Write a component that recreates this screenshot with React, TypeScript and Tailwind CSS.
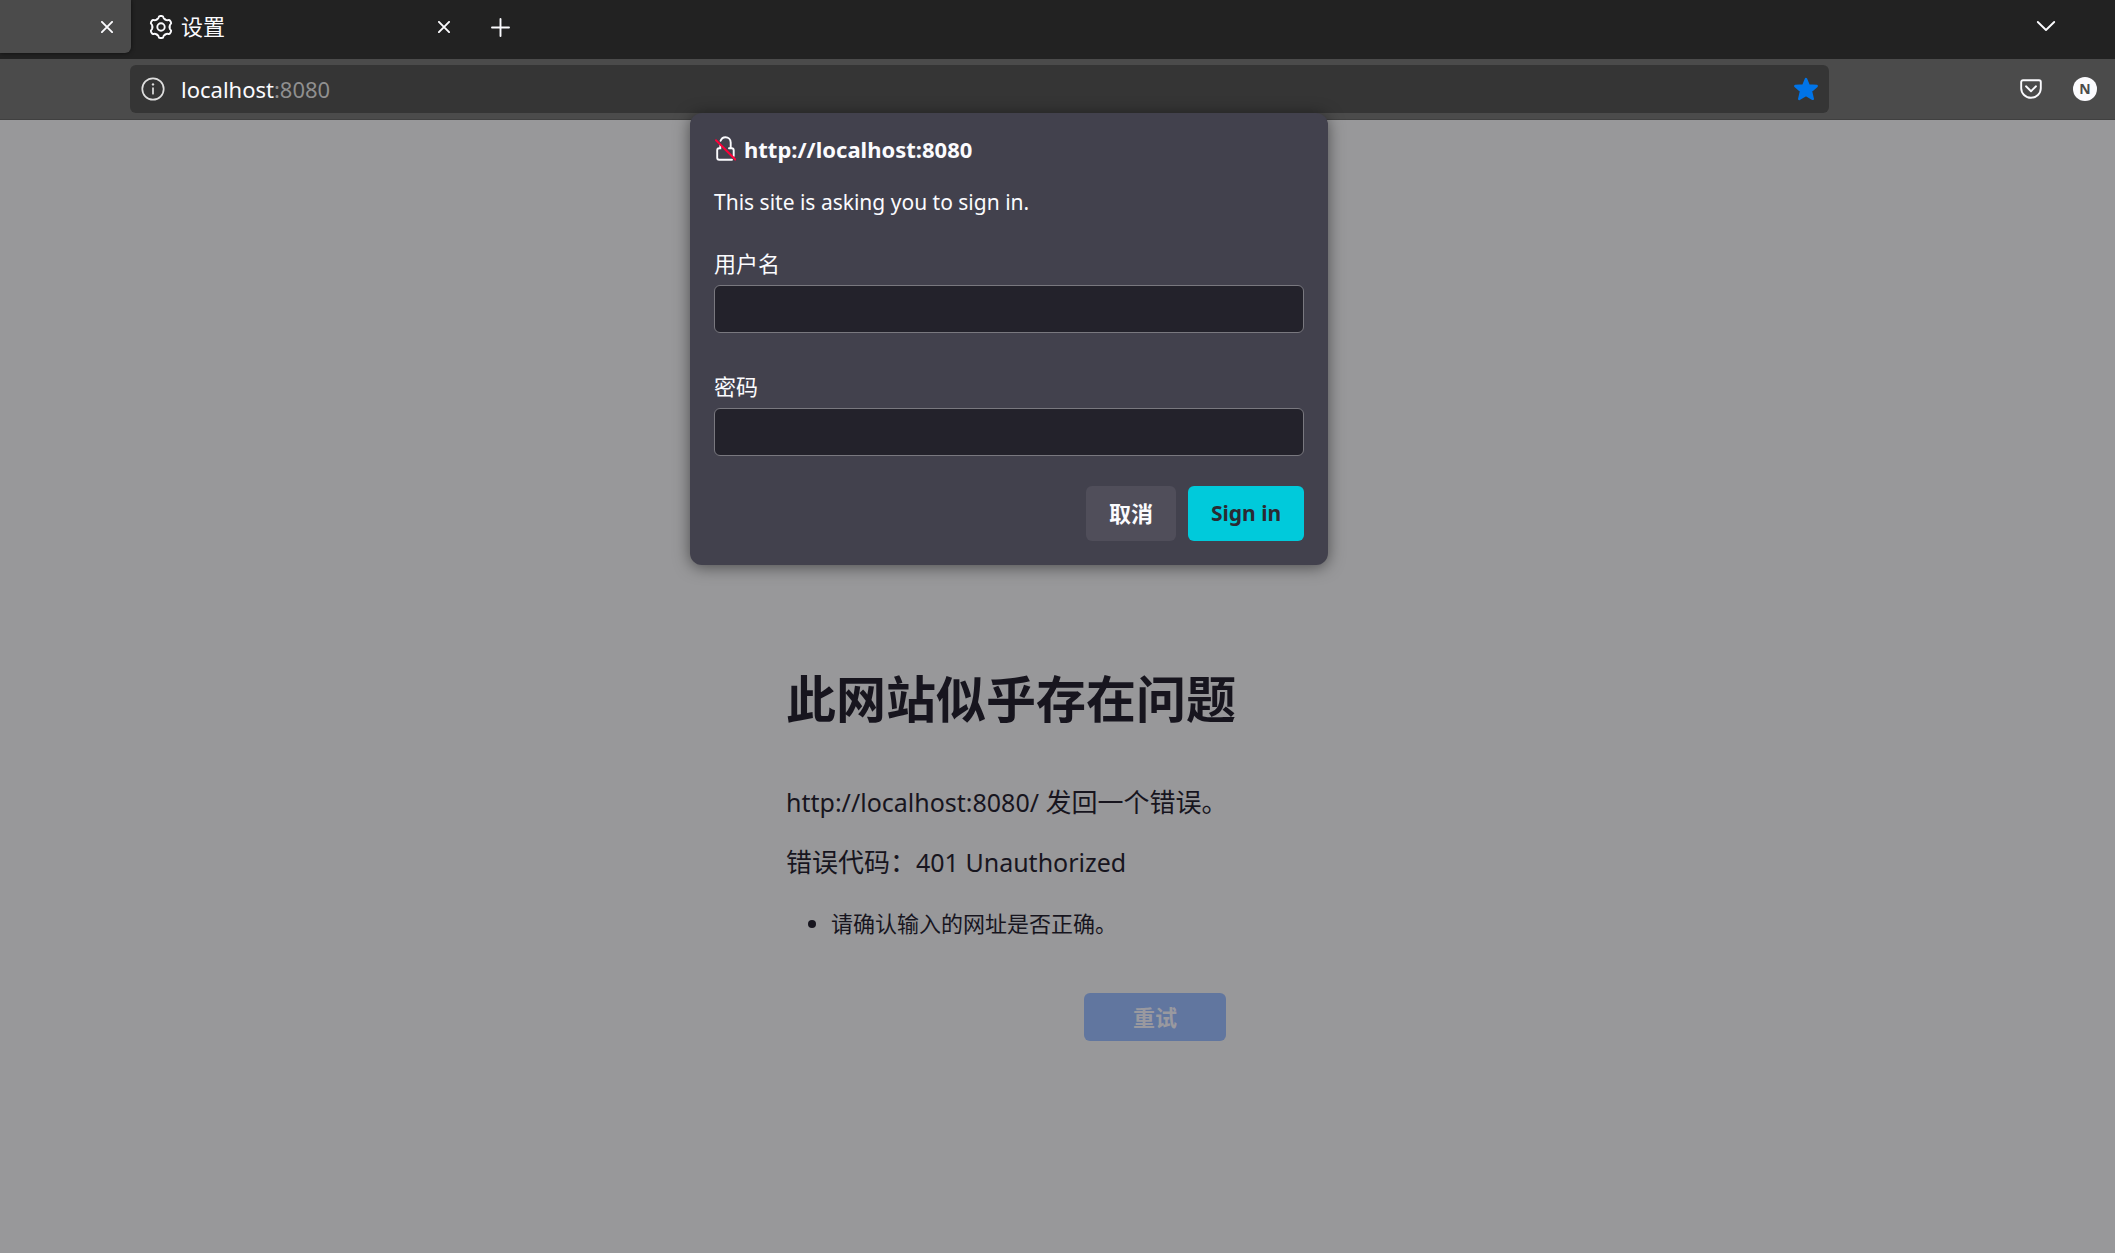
import React from "react";

const icon = "fill-none stroke-current";

function CloseIcon() {
  return (
    <svg viewBox="0 0 12 12" className={`${icon} size-3`} strokeWidth="1.9" strokeLinecap="round" aria-hidden="true">
      <path d="M0.900 0.900l10.200 10.200M11.100 0.900L0.900 11.100" />
    </svg>
  );
}

function GearIcon() {
  const lobe = "M-4.3-7.450C-3.300-8-2.700-8.400-2.500-9.300C-2.300-10.600-1.700-11-.9-11H.9C1.700-11 2.300-10.600 2.500-9.300C2.700-8.400 3.300-8 4.300-7.450";
  return (
    <svg viewBox="-12 -12 24 24" className={`${icon} size-6`} strokeWidth="1.900" strokeLinecap="round" aria-hidden="true">
      {[0, 60, 120, 180, 240, 300].map((angle) => (
        <path key={angle} d={lobe} transform={`rotate(${angle})`} />
      ))}
      <circle r="3.700" />
    </svg>
  );
}

function InfoIcon() {
  return (
    <svg viewBox="0 0 24 24" className={`${icon} size-6`} strokeWidth="1.700" strokeLinecap="round" aria-hidden="true">
      <circle cx="12" cy="12" r="10.700" />
      <path d="M12 11v5.700" />
      <circle cx="12" cy="7.400" r="1.200" fill="currentColor" stroke="none" />
    </svg>
  );
}

function StarIcon() {
  return (
    <svg viewBox="0 0 24 24" className="size-6 fill-current stroke-current" strokeWidth="2.400" strokeLinejoin="round" aria-hidden="true">
      <path d="M12 2l2.700 6.400 8 .6-5.700 5.200 1.800 7.700-6.800-4-6.800 4L7 14.200 1.300 9l8-.6z" />
    </svg>
  );
}

function PocketIcon() {
  return (
    <svg viewBox="0 0 22 20" className={`${icon} h-5 w-[22px]`} strokeWidth="1.900" strokeLinecap="round" strokeLinejoin="round" aria-hidden="true">
      <path d="M3 1.200h16c1 0 1.800.8 1.800 1.800v6.200c0 5.200-4.400 9.600-9.800 9.600S1.200 14.400 1.200 9.200V3c0-1 .8-1.800 1.800-1.800z" />
      <path d="M6 7.300l5 4.900 5-4.900" />
    </svg>
  );
}

function InsecureLockIcon() {
  return (
    <svg viewBox="0 0 22 26" className={`${icon} h-[26px] w-[22px]`} strokeWidth="1.900" strokeLinecap="round" aria-hidden="true">
      <path d="M6.600 4.800C7.400 2.500 9.200 1.200 11.400 1.200c3 0 5.300 2.300 5.300 5.300v5.800M6.300 9.500v2.800H5.200c-1.200 0-2 .8-2 2v7.500c0 1.200.8 2 2 2h12.800M15 12.300h2.700c1.200 0 2 .8 2 2v5.700" />
      <path d="M2 4.200l19.300 19.300" stroke="#ff0039" strokeWidth="2" />
    </svg>
  );
}

function Field({ id, label, type }: { id: string; label: string; type: string }) {
  return (
    <div className="flex flex-col gap-2">
      <label htmlFor={id} className="text-[22px] leading-7">{label}</label>
      <input id={id} type={type} className="h-12 w-full rounded-md border border-[#79787f] bg-[#23222b] px-3 text-[22px] outline-none" />
    </div>
  );
}

export default function App() {
  return (
    <div lang="zh-CN" className="relative flex min-h-screen flex-col bg-[#98989a] font-['Noto_Sans','Noto_Sans_CJK_SC',sans-serif] text-[#fbfbfe]">
      <header>
        <div className="flex h-[59px] items-start bg-[#222222]">
          <div className="flex h-[53px] w-[131px] items-center justify-end rounded-br-md bg-[#4b4b4b] pr-[18px] shadow-[0_0_4px_rgba(0,0,0,0.6)]">
            <button aria-label="关闭标签页"><CloseIcon /></button>
          </div>
          <div className="flex h-[53px] w-[319px] items-center pl-[18px]">
            <GearIcon />
            <span className="ml-2 pb-0.5 text-[22px] leading-7">设置</span>
            <button aria-label="关闭标签页" className="ml-auto"><CloseIcon /></button>
          </div>
          <button aria-label="新建标签页" className="ml-10 flex h-[53px] items-center">
            <svg viewBox="0 0 20 20" className={`${icon} size-5`} strokeWidth="1.900" strokeLinecap="round" aria-hidden="true">
              <path d="M10.500 2v17M2 10.500h17" />
            </svg>
          </button>
          <button aria-label="列出所有标签页" className="mr-[59px] ml-auto flex h-[51px] items-center">
            <svg viewBox="0 0 20 12" className={`${icon} h-3 w-5`} strokeWidth="1.900" strokeLinecap="round" strokeLinejoin="round" aria-hidden="true">
              <path d="M1.800 2l8.200 8 8.200-8" />
            </svg>
          </button>
        </div>
        <div className="flex h-[61px] items-center border-b border-[#404040] bg-[#4b4b4b] pr-[18px] pl-[130px]">
          <div className="flex h-12 flex-1 items-center rounded-md bg-[#353535] pr-[11px] pl-[11px]">
            <button aria-label="网站信息" className="text-[#dedede]"><InfoIcon /></button>
            <div className="ml-4 text-[22px] leading-7">
              localhost<span className="text-[#8f8f8f]">:8080</span>
            </div>
            <button aria-label="编辑书签" className="ml-auto text-[#0074e8]"><StarIcon /></button>
          </div>
          <button aria-label="Pocket" className="ml-[191px]"><PocketIcon /></button>
          <button aria-label="账户" className="ml-[31px] flex size-6 items-center justify-center rounded-full bg-[#fbfbfe] text-sm font-bold text-[#4b4b4b]">N</button>
        </div>
      </header>

      <main className="flex flex-1 flex-col items-center pt-[549px] pr-[97px] pb-16 text-[#17151e]">
        <div className="flex w-[446px] flex-col">
          <h1 className="text-[50px] leading-[60px] font-bold whitespace-nowrap">此网站似乎存在问题</h1>
          <p className="mt-[55px] text-[26px] leading-9 whitespace-nowrap"><span className="text-[25px]">http://localhost:8080/ </span>发回一个错误。</p>
          <p className="mt-6 text-[26px] leading-9 whitespace-nowrap">错误代码：<span className="text-[25px]">401 Unauthorized</span></p>
          <ul className="mt-[25px] list-disc pl-[45px] text-[22px] leading-9">
            <li>请确认输入的网址是否正确。</li>
          </ul>
          <button className="mt-[52px] mr-1.5 h-12 w-[142px] self-end rounded-md bg-[#61769f] text-[22px] font-bold text-[#99999f]">重试</button>
        </div>
      </main>

      <div className="absolute inset-x-0 top-[113px] flex justify-center pr-[97px]">
        <form
          role="dialog"
          aria-labelledby="origin"
          onSubmit={(e: React.FormEvent) => e.preventDefault()}
          className="flex w-[638px] flex-col rounded-xl bg-[#42414d] px-6 pt-[23px] pb-6 shadow-[0_2px_16px_rgba(0,0,0,0.5)]"
        >
          <div className="flex h-[26px] items-center gap-2">
            <InsecureLockIcon />
            <h2 id="origin" className="text-[22px] leading-[26px] font-bold">http://localhost:8080</h2>
          </div>
          <p className="mt-[26px] text-[21px] leading-7">This site is asking you to sign in.</p>
          <div className="mt-[33px] flex flex-col gap-[39px]">
            <Field id="username" label="用户名" type="text" />
            <Field id="password" label="密码" type="password" />
          </div>
          <div className="mt-[30px] flex justify-end gap-3">
            <button type="button" className="h-[55px] w-[90px] rounded-md bg-[#504e5a] text-[22px] font-bold">取消</button>
            <button type="submit" className="h-[55px] w-[116px] rounded-md bg-[#00cadb] text-[21px] font-bold text-[#2b2a33]">Sign in</button>
          </div>
        </form>
      </div>
    </div>
  );
}
